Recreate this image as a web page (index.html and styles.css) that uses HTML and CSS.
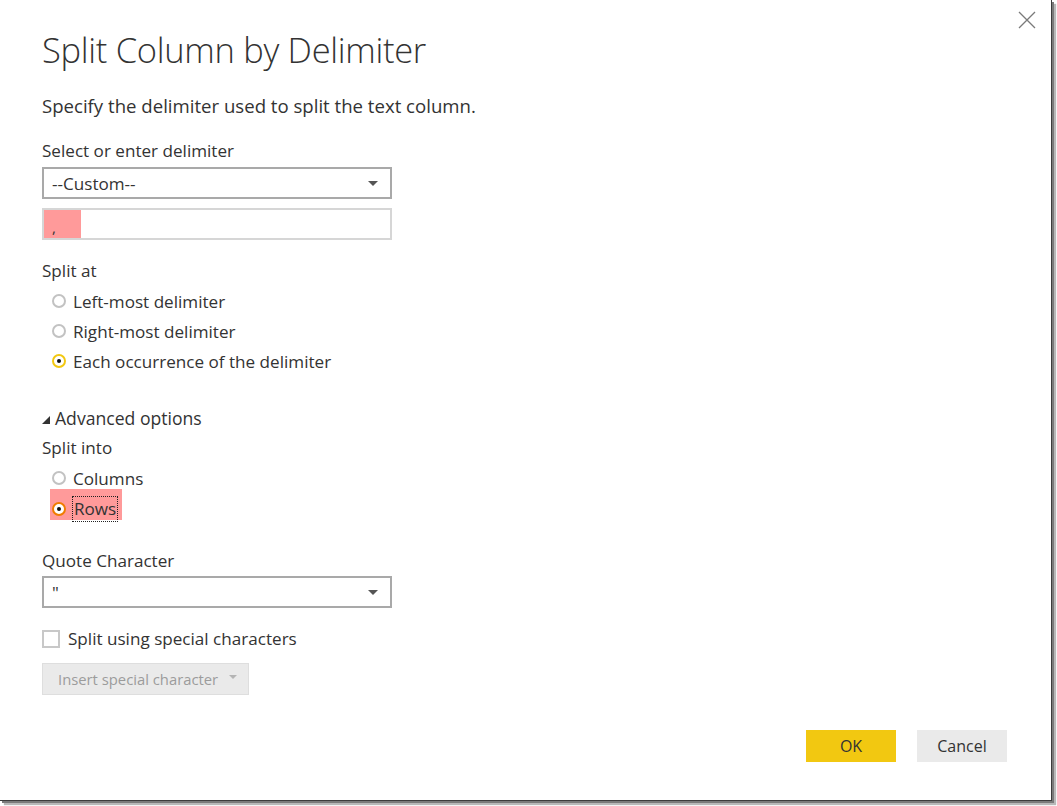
FILE: index.html
```html
<!DOCTYPE html>
<html>
<head>
<meta charset="utf-8">
<link rel="stylesheet" href="styles.css">
</head>
<body>
<div class="dialog">
  <button class="close" aria-label="Close">
    <svg width="18" height="18" viewBox="0 0 18 18"><path d="M1 1 L17 17 M17 1 L1 17" stroke="#7a7a7a" stroke-width="1.3" fill="none"/></svg>
  </button>
  <h1 class="title">Split Column by Delimiter</h1>
  <p class="subtitle">Specify the delimiter used to split the text column.</p>

  <div class="label lbl-delim">Select or enter delimiter</div>
  <div class="select">
    <span>--Custom--</span>
    <span class="arrow"></span>
  </div>
  <div class="input">
    <span class="hl">,</span>
  </div>

  <div class="label lbl-split">Split at</div>
  <div class="radios radios-at">
    <div class="radio"><span class="dot"></span><span>Left-most delimiter</span></div>
    <div class="radio"><span class="dot"></span><span>Right-most delimiter</span></div>
    <div class="radio"><span class="dot on"></span><span>Each occurrence of the delimiter</span></div>
  </div>

  <div class="advanced"><span class="tri"></span><span>Advanced options</span></div>
  <div class="label lbl-into">Split into</div>
  <div class="radios radios-into">
    <div class="radio"><span class="dot"></span><span>Columns</span></div>
    <div class="radio rows"><span class="dot orange"></span><span class="focus">Rows</span></div>
  </div>

  <div class="label lbl-quote">Quote Character</div>
  <div class="select select-quote">
    <span>"</span>
    <span class="arrow"></span>
  </div>

  <div class="check"><span class="box"></span><span>Split using special characters</span></div>
  <div class="insert"><span>Insert special character</span><span class="arrow small"></span></div>

  <div class="footer">
    <button class="btn ok">OK</button>
    <button class="btn cancel">Cancel</button>
  </div>
</div>
</body>
</html>
```
FILE: styles.css
```css
html, body {
  margin: 0;
  padding: 0;
  background: #ffffff;
}
body {
  font-family: "Segoe UI", "Open Sans", "Noto Sans", sans-serif;
  color: #333333;
  width: 1057px;
  height: 806px;
  overflow: hidden;
}
.dialog {
  position: relative;
  box-sizing: border-box;
  width: 1052px;
  height: 801px;
  padding: 0 0 0 42px;
  background: #fff;
  border-right: 1px solid #3c3c3c;
  border-bottom: 1px solid #3c3c3c;
  box-shadow: 2px 2px 0 #7a7a7a, 4px 4px 1px #b8b8b8;
  display: flex;
  flex-direction: column;
  align-items: flex-start;
}
.close {
  position: absolute;
  top: 11px;
  right: 15px;
  width: 18px;
  height: 18px;
  padding: 0;
  border: 0;
  background: none;
}
.close svg { display: block; }
.title {
  margin: 28px 0 0 0;
  font-weight: 300;
  font-size: 34.5px;
  line-height: 44px;
  color: #333;
  letter-spacing: -0.3px;
}
.subtitle {
  margin: 22px 0 0 0;
  font-size: 18.6px;
  line-height: 24px;
  color: #333;
}
.label {
  font-size: 17.1px;
  line-height: 22px;
}
.lbl-delim { margin-top: 22px; }
.select {
  box-sizing: border-box;
  width: 350px;
  height: 32px;
  margin-top: 5px;
  border: 2px solid #a9a9a9;
  display: flex;
  align-items: center;
  justify-content: space-between;
  padding: 0 10px 0 8px;
  font-size: 17.1px;
}
.select-quote { margin-top: 4px; }
.arrow {
  width: 0;
  height: 0;
  border-left: 5px solid transparent;
  border-right: 5px solid transparent;
  border-top: 5px solid #555;
  margin-right: 2px;
}
.input {
  box-sizing: border-box;
  width: 350px;
  height: 32px;
  margin-top: 9px;
  border: 2px solid #d6d6d6;
  display: flex;
}
.hl {
  width: 37px;
  height: 100%;
  background: #ff9a9a;
  font-size: 15px;
  line-height: 34px;
  padding-left: 8px;
  box-sizing: border-box;
  color: #333;
}
.lbl-split { margin-top: 20px; }
.radios {
  display: flex;
  flex-direction: column;
  padding-left: 10px;
}
.radios-at { margin-top: 4px; }
.radios-into { margin-top: 4px; }
.radio {
  display: flex;
  align-items: center;
  height: 30px;
  font-size: 17.1px;
}
.dot {
  box-sizing: border-box;
  width: 14px;
  height: 14px;
  border: 2px solid #c2c2c2;
  border-radius: 50%;
  margin-right: 7px;
  display: flex;
  align-items: center;
  justify-content: center;
  background: #fff;
}
.dot.on { border-color: #f2c811; border-width: 2.5px; }
.dot.on::after, .dot.orange::after {
  content: "";
  width: 4px;
  height: 4px;
  border-radius: 50%;
  background: #111;
}
.dot.orange { border-color: #f07c00; border-width: 2.5px; }
.advanced {
  display: flex;
  align-items: center;
  margin-top: 31px;
  font-size: 17.6px;
  line-height: 22px;
}
.tri {
  width: 0;
  height: 0;
  border-left: 8px solid transparent;
  border-bottom: 8px solid #333;
  margin-right: 5px;
  margin-top: 3px;
}
.lbl-into { margin-top: 8px; }
.radios .rows {
  box-sizing: border-box;
  background: #ff9a9a;
  margin-left: -2px;
  margin-top: -4px;
  padding-left: 2px;
  padding-top: 8px;
  width: 72px;
  height: 31px;
}
.focus {
  outline: 1px dotted #222;
  outline-offset: 0;
  padding: 0 1px;
  line-height: 24px;
}
.lbl-quote { margin-top: 30px; }
.check {
  display: flex;
  align-items: center;
  margin-top: 20px;
  font-size: 17.1px;
  line-height: 22px;
}
.box {
  box-sizing: border-box;
  width: 18px;
  height: 18px;
  border: 2px solid #c8c8c8;
  margin-right: 8px;
}
.insert {
  box-sizing: border-box;
  display: flex;
  align-items: center;
  width: 207px;
  height: 32px;
  margin-top: 13px;
  padding: 0 0 0 15px;
  background: #eaeaea;
  border: 1px solid #dedede;
  color: #9c9c9c;
  font-size: 14.8px;
}
.arrow.small {
  border-top-color: #b4b4b4;
  border-left-width: 4.5px;
  border-right-width: 4.5px;
  border-top-width: 4.5px;
  margin-left: 11px;
  margin-top: -4px;
}
.footer {
  display: flex;
  gap: 21px;
  align-self: flex-end;
  margin-top: auto;
  margin-bottom: 38px;
  margin-right: 44px;
}
.btn {
  width: 90px;
  height: 32px;
  border: 0;
  font-family: inherit;
  font-size: 16px;
  color: #333;
  padding: 0;
}
.ok { background: #f2c811; }
.cancel { background: #eaeaea; }
```
